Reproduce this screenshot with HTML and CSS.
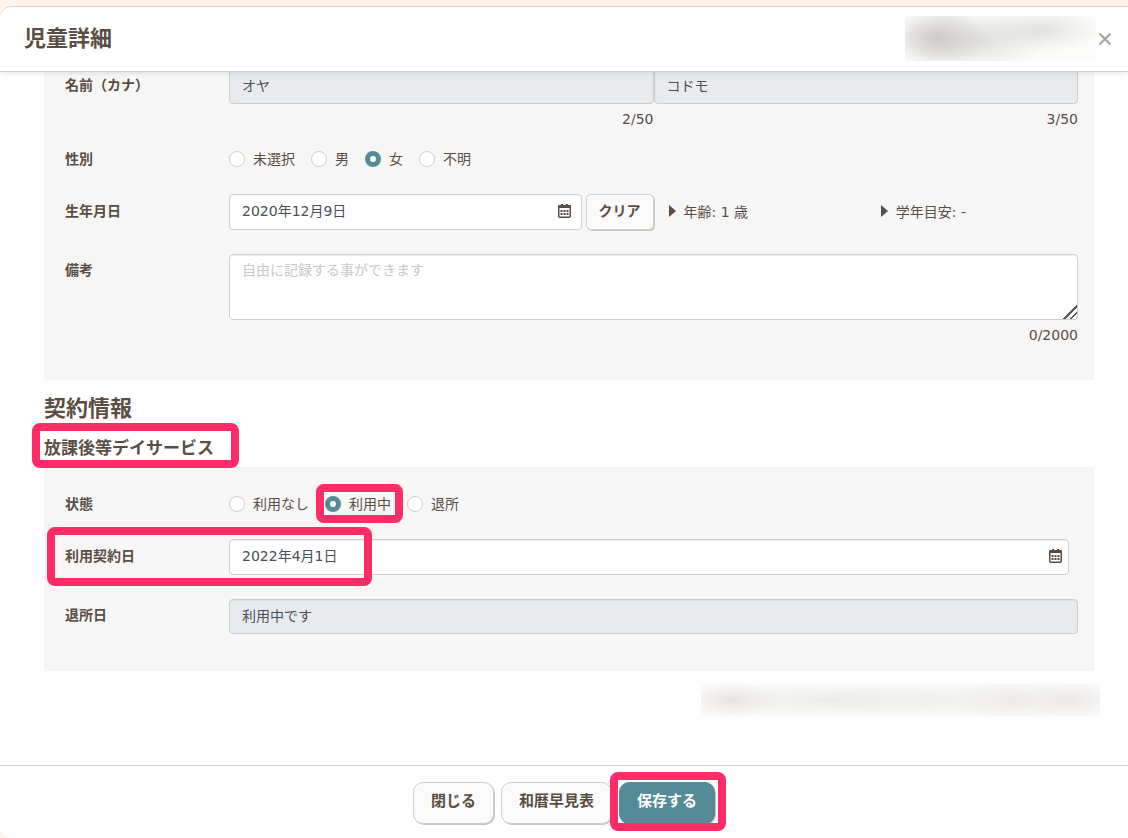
FILE: index.html
```html
<!DOCTYPE html>
<html lang="ja">
<head>
  <meta charset="utf-8">
  <meta name="viewport" content="width=device-width, initial-scale=1">
  <title>児童詳細</title>
  <link rel="stylesheet" href="styles.css">
</head>
<body>
<form class="modal">
  <header class="modal-header">
    <h1>児童詳細</h1>
    <div class="masked masked-user"></div>
    <button type="button" class="close" aria-label="閉じる">
      <svg width="14" height="14" viewBox="0 0 14 14"><path d="M1.5 1.5l11 11M12.5 1.5l-11 11"/></svg>
    </button>
  </header>

  <main class="modal-body">
    <section class="panel panel-child">
      <div class="row row-name">
        <label class="label" for="kanaLast">名前（カナ）</label>
        <div class="field name-fields">
          <div class="name-field">
            <input class="input" type="text" id="kanaLast" value="オヤ" disabled>
            <div class="counter">2/50</div>
          </div>
          <div class="name-field">
            <input class="input" type="text" id="kanaFirst" aria-label="名（カナ）" value="コドモ" disabled>
            <div class="counter">3/50</div>
          </div>
        </div>
      </div>

      <div class="row row-radio" role="radiogroup" aria-labelledby="genderLabel">
        <span class="label" id="genderLabel">性別</span>
        <div class="field radios">
          <label class="radio"><input type="radio" name="gender">未選択</label>
          <label class="radio"><input type="radio" name="gender">男</label>
          <label class="radio"><input type="radio" name="gender" checked>女</label>
          <label class="radio"><input type="radio" name="gender">不明</label>
        </div>
      </div>

      <div class="row row-date">
        <label class="label" for="birthday">生年月日</label>
        <div class="field birth-fields">
          <div class="birth-input">
            <div class="date">
              <input class="input" type="text" id="birthday" value="2020年12月9日">
              <svg class="calendar" width="13" height="14" viewBox="0 0 13 14">
                <path class="calendar-top" d="M0 2q0-1 1-1h2V0h2v1h3V0h2v1h2q1 0 1 1v2H0z"/>
                <path class="calendar-frame" d="M.75 3v9.250q0 1 1 1h9.500q1 0 1-1V3"/>
                <path class="calendar-days" d="M2.500 7h8M2.500 10h8"/>
              </svg>
            </div>
            <button type="button" class="btn btn-clear">クリア</button>
          </div>
          <div class="birth-info">
            <span class="info">年齢: 1 歳</span>
            <span class="info">学年目安: -</span>
          </div>
        </div>
      </div>

      <div class="row">
        <label class="label" for="note">備考</label>
        <div class="field">
          <textarea class="input note" id="note" placeholder="自由に記録する事ができます"></textarea>
          <div class="counter">0/2000</div>
        </div>
      </div>
    </section>

    <h2>契約情報</h2>
    <h3><span class="marked marked-title">放課後等デイサービス</span></h3>

    <section class="panel panel-contract">
      <div class="row row-radio" role="radiogroup" aria-labelledby="statusLabel">
        <span class="label" id="statusLabel">状態</span>
        <div class="field radios">
          <label class="radio"><input type="radio" name="status">利用なし</label>
          <label class="radio marked marked-radio"><input type="radio" name="status" checked>利用中</label>
          <label class="radio"><input type="radio" name="status">退所</label>
        </div>
      </div>

      <div class="row row-date marked marked-date">
        <label class="label" for="contractDate">利用契約日</label>
        <div class="field contract-field">
          <div class="date">
            <input class="input" type="text" id="contractDate" value="2022年4月1日">
            <svg class="calendar" width="13" height="14" viewBox="0 0 13 14">
              <path class="calendar-top" d="M0 2q0-1 1-1h2V0h2v1h3V0h2v1h2q1 0 1 1v2H0z"/>
              <path class="calendar-frame" d="M.75 3v9.250q0 1 1 1h9.500q1 0 1-1V3"/>
              <path class="calendar-days" d="M2.500 7h8M2.500 10h8"/>
            </svg>
          </div>
        </div>
      </div>

      <div class="row">
        <label class="label" for="leaveDate">退所日</label>
        <div class="field">
          <input class="input" type="text" id="leaveDate" value="利用中です" disabled>
        </div>
      </div>
    </section>

    <div class="masked masked-updated"></div>
  </main>

  <footer class="modal-footer">
    <button type="button" class="btn btn-large">閉じる</button>
    <button type="button" class="btn btn-large">和暦早見表</button>
    <button type="submit" class="btn btn-large btn-primary marked marked-save">保存する</button>
  </footer>
</form>
</body>
</html>
```
FILE: styles.css
```css
*, *::before, *::after {
  box-sizing: border-box;
}
body {
  margin: 0;
  height: 100vh;
  padding-top: 6px;
  overflow: hidden;
  background: #fff4ea;
  color: #5a4e44;
  font-family: "DejaVu Sans", "Noto Sans CJK JP", sans-serif;
  font-size: 14px;
  line-height: 20px;
}
h1, h2, h3 {
  margin: 0;
  font-family: "Noto Sans CJK JP", sans-serif;
  font-weight: bold;
}
h1, h2 {
  font-size: 22px;
  line-height: 32px;
}
h1 {
  padding-bottom: 6px;
}
h2 {
  margin-bottom: 13px;
}
h3 {
  font-size: 17px;
  line-height: 24px;
}

/* モーダル */
.modal {
  display: flex;
  flex-direction: column;
  height: 100%;
  background: #fff;
  border-top: 1px solid #d6d2c8;
  border-radius: 12px 0 0 12px;
}
.modal-header {
  position: relative;
  z-index: 1;
  display: flex;
  align-items: center;
  flex: none;
  height: 65px;
  padding: 0 16px 0 24px;
  background: #fff;
  border-bottom: 1px solid #d0cec2;
  border-radius: 12px 0 0 0;
  box-shadow: 0 2px 4px rgba(0,0,0,0.08);
}
.close {
  padding: 0;
  width: 14px;
  height: 14px;
  margin-left: 2px;
  border: none;
  background: none;
  cursor: pointer;
}
.close svg {
  display: block;
  fill: none;
  stroke: #a8a29c;
  stroke-width: 2;
}
.modal-body {
  flex: 1;
  min-height: 0;
  overflow: hidden;
  padding: 0 34px 0 44px;
}
.modal-footer {
  display: flex;
  justify-content: center;
  gap: 7px;
  flex: none;
  height: 73px;
  padding-top: 16px;
  border-top: 1px solid #d0cec8;
}

/* ぼかし */
.masked {
  background: #fcfcfb;
  overflow: hidden;
}
.masked::before {
  content: "";
  display: block;
  height: 100%;
}
.masked-user {
  width: 191px;
  height: 45px;
  margin: 0 0 2px auto;
}
.masked-user::before {
  background:
    radial-gradient(ellipse 50px 30px at 32px 22px, #cccac6, transparent),
    radial-gradient(ellipse 70px 30px at 72px 24px, #dfdedb, transparent),
    radial-gradient(ellipse 60px 22px at 136px 14px, #e2e1df, transparent);
}
.masked-updated {
  width: 399px;
  height: 32px;
  margin: 13px -6px 0 auto;
}
.masked-updated::before {
  background:
    radial-gradient(ellipse 50px 18px at 32px 16px, #e8e4e1, transparent),
    radial-gradient(ellipse 130px 18px at 130px 16px, #ecebe9, transparent),
    radial-gradient(ellipse 110px 18px at 230px 16px, #f0efed, transparent),
    radial-gradient(ellipse 70px 20px at 310px 16px, #eae8e5, transparent),
    radial-gradient(ellipse 50px 20px at 370px 16px, #eae8e5, transparent);
}

/* フォーム */
.panel {
  padding: 0 16px 0 21px;
  background: #f6f6f6;
}
.panel-child {
  margin-top: -3px;
  padding-bottom: 35px;
  margin-bottom: 10px;
}
.panel-contract {
  margin-top: 8px;
  padding-top: 26px;
  padding-bottom: 37px;
}
.row {
  display: flex;
  margin-bottom: 24px;
}
.row:last-child {
  margin-bottom: 0;
}
.row-name {
  margin-bottom: 19px;
}
.row-radio {
  margin-bottom: 25px;
}
.label {
  flex: none;
  width: 164px;
  padding-top: 6px;
  font-weight: bold;
}
.row-radio .label {
  padding-top: 1px;
}
.row-date .label {
  padding-top: 7px;
}
.field {
  flex: 1;
  min-width: 0;
}
.input {
  display: block;
  width: 100%;
  height: 35px;
  padding: 0 12px 4px;
  background: #fff;
  border: 1px solid #d2cdc8;
  border-radius: 4px;
  box-shadow: inset 0 1px 1px rgba(90,60,40,0.08);
  color: #495057;
  font: inherit;
}
.input:disabled {
  background: #e8ebee;
}
.input::placeholder {
  color: #c8c8c8;
}
.note {
  height: 66px;
  padding-top: 5px;
  resize: vertical;
}
.note::-webkit-resizer {
  background: linear-gradient(135deg, transparent 52%, #555 52%, #555 60%, transparent 60%, transparent 74%, #555 74%, #555 82%, transparent 82%);
}
.counter {
  margin-top: 5px;
  text-align: right;
}
.name-fields {
  display: flex;
}
.name-field {
  flex: 1;
}
.radios {
  display: flex;
  gap: 16px;
}
.radio {
  display: flex;
  align-items: center;
  gap: 8px;
}
.radio input {
  appearance: none;
  width: 16px;
  height: 16px;
  margin: 0;
  background: #fff;
  border: 1px solid #d2cdc8;
  border-radius: 50%;
}
.radio input:checked {
  border: 5px solid #558b97;
}
.date {
  position: relative;
  flex: 1;
}
.date .input {
  height: 36px;
}
.calendar {
  position: absolute;
  top: 10px;
  right: 11px;
}
.calendar-top {
  fill: #5a4e44;
}
.calendar-frame {
  fill: none;
  stroke: #5a4e44;
  stroke-width: 1.5;
}
.calendar-days {
  fill: none;
  stroke: #5a4e44;
  stroke-width: 2;
  stroke-dasharray: 2 1;
}
.birth-fields {
  display: grid;
  grid-template-columns: 1fr 1fr;
}
.birth-input, .birth-info {
  display: flex;
}
.birth-input {
  gap: 4px;
}
.birth-info {
  padding-top: 8px;
}
.info {
  display: flex;
  flex: 1;
  gap: 8px;
  padding-left: 15px;
}
.info::before {
  content: "";
  height: 12px;
  margin-top: 3px;
  border: 6px solid transparent;
  border-left: 7px solid #5a4e44;
  border-right: none;
}
.contract-field {
  padding-right: 9px;
}
.contract-field .calendar {
  right: 7px;
}

/* ボタン */
.btn {
  height: 36px;
  padding: 0 12px 4px;
  background: #fafafa;
  border: 1px solid #d0cec8;
  border-radius: 5px;
  box-shadow: 1px 1px 0 #c8c5be;
  color: #5a4e44;
  font: bold 14px/20px "Noto Sans CJK JP", sans-serif;
  cursor: pointer;
}
.btn-large {
  height: 42px;
  padding: 0 17px 6px;
  border-radius: 10px;
  font-size: 15px;
}
.btn-primary {
  background: #558b97;
  border-color: #558b97;
  color: #fff;
}

/* 強調枠 */
.marked {
  position: relative;
}
.marked::after {
  content: "";
  position: absolute;
  z-index: 2;
  border: 8px solid #ff2c68;
  border-radius: 8px;
  pointer-events: none;
}
.marked-title::after {
  inset: -11px -25px -9px -12px;
}
.marked-radio::after {
  inset: -9px -12px -9px -9px;
}
.marked-date::after {
  inset: -12px auto -11px -18px;
  width: 325px;
}
.marked-save::after {
  inset: -11px -12px -8px -10px;
}
```
